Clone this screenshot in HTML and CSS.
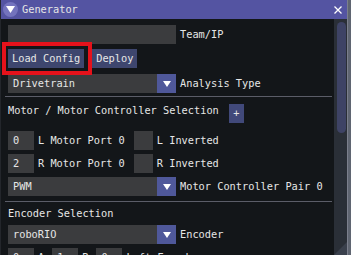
FILE: index.html
```html
<!DOCTYPE html>
<html lang="en">
<head>
<meta charset="UTF-8">
<title>Generator</title>
<link rel="stylesheet" href="styles.css">
</head>
<body>
<div class="window">
    <div class="titlebar">
        <span class="collapse"><svg width="9" height="7" viewBox="0 0 9 7"><path d="M0 0H9L4.5 7Z" fill="#fff"/></svg></span>
        <span class="title">Generator</span>
        <span class="close"><svg width="8" height="8" viewBox="0 0 8 8"><path d="M0.5 0.5L7.5 7.5M7.5 0.5L0.5 7.5" stroke="#fff" stroke-width="1.3"/></svg></span>
    </div>
    <div class="main">
        <div class="content">
            <div class="row r-team">
                <div class="input wide"></div>
                <span class="label">Team/IP</span>
            </div>
            <div class="row r-buttons">
                <button class="btn">Load Config</button>
                <button class="btn gap">Deploy</button>
            </div>
            <div class="row r-type">
                <div class="combo"><span class="value">Drivetrain</span><span class="arrow"><svg width="8" height="6" viewBox="0 0 8 6"><path d="M0 0H8L4 6Z" fill="#fff"/></svg></span></div>
                <span class="label">Analysis Type</span>
            </div>
            <div class="sep s-first"></div>
            <div class="row r-motor">
                <span class="heading">Motor / Motor Controller Selection</span>
                <button class="btn plus">+</button>
            </div>
            <div class="row r-left">
                <div class="input small">0</div>
                <span class="label">L Motor Port 0</span>
                <div class="check"></div>
                <span class="label">L Inverted</span>
            </div>
            <div class="row r-right">
                <div class="input small">2</div>
                <span class="label">R Motor Port 0</span>
                <div class="check"></div>
                <span class="label">R Inverted</span>
            </div>
            <div class="row r-pwm">
                <div class="combo"><span class="value">PWM</span><span class="arrow"><svg width="8" height="6" viewBox="0 0 8 6"><path d="M0 0H8L4 6Z" fill="#fff"/></svg></span></div>
                <span class="label">Motor Controller Pair 0</span>
            </div>
            <div class="sep s-second"></div>
            <div class="heading h-encoder">Encoder Selection</div>
            <div class="row r-encoder">
                <div class="combo"><span class="value">roboRIO</span><span class="arrow"><svg width="8" height="6" viewBox="0 0 8 6"><path d="M0 0H8L4 6Z" fill="#fff"/></svg></span></div>
                <span class="label">Encoder</span>
            </div>
            <div class="row r-ports">
                <div class="input small">0</div>
                <span class="label">A</span>
                <div class="input small gap">1</div>
                <span class="label">B</span>
                <div class="input small gap">0</div>
                <span class="label">Left Encoder</span>
            </div>
        </div>
        <div class="scrollbar"><div class="grab"></div></div>
    </div>
    <div class="grip"></div>
    <div class="highlight"></div>
</div>
</body>
</html>
```

FILE: styles.css
```css
body {
    margin: 0;
    width: 351px;
    height: 255px;
    overflow: hidden;
    background-color: #5f6571;
    font-family: "DejaVu Sans Mono", monospace;
    font-size: 10.3px;
    color: #e6e6e6;
}

.window {
    position: relative;
    width: 346px;
    height: 255px;
    background-color: #131619;
    border-left: 1px solid #23262b;
    border-right: 1px solid #7b7f8c;
    display: flex;
    flex-direction: column;
    overflow: hidden;
}

.titlebar {
    height: 19px;
    flex: none;
    background-color: #5454a2;
    display: flex;
    align-items: center;
}

.collapse {
    width: 15px;
    height: 15px;
    margin-left: 2px;
    border-radius: 50%;
    background-color: #7373bd;
    display: flex;
    align-items: center;
    justify-content: center;
}

.title {
    margin-left: 4px;
    line-height: 13px;
}

.close {
    margin-left: auto;
    margin-right: 5px;
    display: flex;
}

.main {
    flex: 1;
    display: flex;
    min-height: 0;
}

.content {
    flex: 1;
    padding-left: 7px;
    display: flex;
    flex-direction: column;
    white-space: nowrap;
}

.row {
    display: flex;
    align-items: center;
    height: 19px;
    flex: none;
}

.r-team { margin-top: 6px; }
.r-buttons { margin-top: 5px; }
.r-type { margin-top: 6px; }
.r-motor { margin-top: 7px; align-items: flex-start; }
.r-left { margin-top: 8px; }
.r-right { margin-top: 4px; }
.r-pwm { margin-top: 4px; }
.r-encoder { margin-top: 5px; }
.r-ports { margin-top: 4px; }

.input {
    height: 19px;
    line-height: 19px;
    background-color: #3b3c3e;
    padding-left: 5px;
    box-sizing: border-box;
}

.input.wide { width: 168px; }
.input.small { width: 26px; }
.input.gap { margin-left: 8px; }

.label {
    margin-left: 4px;
    line-height: 13px;
}

.check {
    width: 19px;
    height: 19px;
    margin-left: 9px;
    background-color: #3b3c3e;
}

.btn {
    height: 19px;
    padding: 0 4px;
    border: none;
    margin: 0;
    background-color: #3e466e;
    color: #e6e6e6;
    font-family: inherit;
    font-size: inherit;
    line-height: 19px;
}

.btn.gap { margin-left: 8px; }

.btn.plus {
    margin-left: 10px;
    width: 15px;
    padding: 0;
    text-align: center;
    background-color: #41497a;
}

.combo {
    width: 168px;
    height: 19px;
    background-color: #3b3c3e;
    display: flex;
}

.combo .value {
    flex: 1;
    padding-left: 5px;
    line-height: 19px;
}

.combo .arrow {
    width: 19px;
    background-color: #4f589a;
    display: flex;
    align-items: center;
    justify-content: center;
}

.heading {
    line-height: 13px;
}

.h-encoder {
    margin-top: 5px;
    flex: none;
}

.sep {
    height: 1px;
    flex: none;
    width: 327px;
    margin-left: -3px;
    background-color: #5b5d68;
}

.s-first { margin-top: 3px; }
.s-second { margin-top: 5px; }

.scrollbar {
    width: 13px;
    margin-right: 0;
    background-color: #2a2f37;
    padding: 3px 1px 0 3px;
    box-sizing: border-box;
}

.grab {
    height: 111px;
    border-radius: 5px;
    background-color: #3e4365;
}

.grip {
    position: absolute;
    right: 0;
    bottom: 0;
    width: 0;
    height: 0;
    border-left: 13px solid transparent;
    border-bottom: 13px solid #3a404c;
}

.highlight {
    position: absolute;
    left: 1px;
    top: 42px;
    width: 90px;
    height: 33px;
    border: 4px solid #e5121b;
    box-sizing: border-box;
}
```
